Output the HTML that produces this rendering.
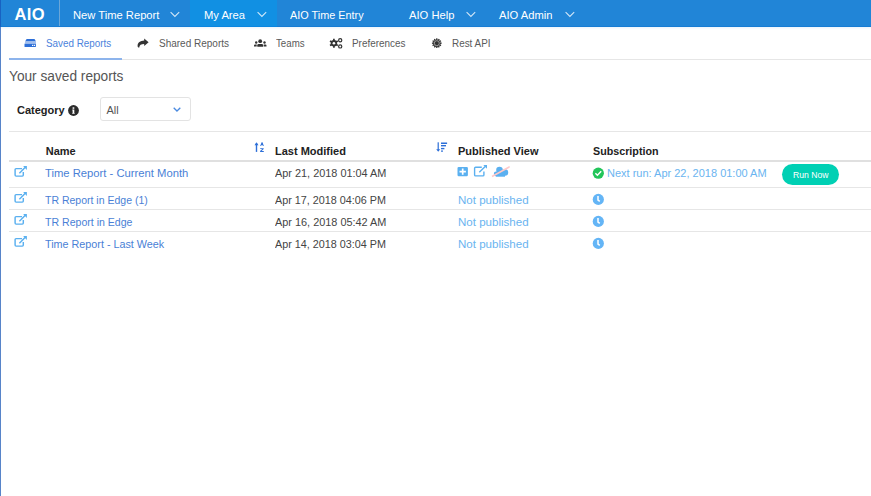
<!DOCTYPE html>
<html><head><meta charset="utf-8">
<style>
*{margin:0;padding:0;box-sizing:border-box}
html,body{width:871px;height:496px;overflow:hidden;background:#fff;font-family:"Liberation Sans",sans-serif}
.a{position:absolute;white-space:nowrap;line-height:1;transform-origin:0 0}
#lb{position:absolute;left:0;top:27px;width:1px;height:469px;background:#5784c9}#lb2{position:absolute;left:0;top:0;width:1px;height:27px;background:#1862c2}
#nav{position:absolute;left:0;top:0;width:871px;height:27px;background:#2185d7;border-bottom:1px solid #167cd4;box-shadow:0 1px 2px rgba(20,120,220,.10)}
#act{position:absolute;left:190px;top:0;width:87px;height:27px;background:#1190e3;border-bottom:1px solid #0a86e0}
#div1{position:absolute;left:59px;top:0;width:1px;height:26px;background:#6aa6d8}
.nt{color:#fff;font-size:11.2px}
.chev{position:absolute;width:9px;height:5px}
.tab{color:#5a5a5a;font-size:10px}
.hd{color:#222;font-size:11px;font-weight:bold}
.lnk{color:#4a7fd6;font-size:11px}
.dt{color:#444;font-size:11px}
.np{color:#6ab4f0;font-size:11px}
.hl{position:absolute;left:9px;width:862px;height:1px;background:#e6e6e6}
</style></head><body>
<div id="nav"></div>
<div id="act"></div>
<div id="div1"></div>
<div id="lb"></div><div id="lb2"></div>

<div class="a" style="left:14.5px;top:6px;color:#fff;font-size:16.5px;font-weight:bold;letter-spacing:.4px">AIO</div>
<div class="a nt" style="left:73px;top:10px">New Time Report</div>
<svg class="a" style="left:170px;top:11px" width="10" height="7" viewBox="0 0 10 7"><path d="M.6 1.1 4.9 5.4 9.2 1.1" fill="none" stroke="rgba(255,255,255,.8)" stroke-width="1.1"/></svg>
<div class="a nt" style="left:204px;top:10px">My Area</div>
<svg class="a" style="left:256.5px;top:11px" width="10" height="7" viewBox="0 0 10 7"><path d="M.6 1.1 4.9 5.4 9.2 1.1" fill="none" stroke="rgba(255,255,255,.8)" stroke-width="1.1"/></svg>
<div class="a nt" style="left:290px;top:10px;transform:scaleX(.97)">AIO Time Entry</div>
<div class="a nt" style="left:409px;top:10px">AIO Help</div>
<svg class="a" style="left:465.5px;top:11px" width="10" height="7" viewBox="0 0 10 7"><path d="M.6 1.1 4.9 5.4 9.2 1.1" fill="none" stroke="rgba(255,255,255,.8)" stroke-width="1.1"/></svg>
<div class="a nt" style="left:499px;top:10px">AIO Admin</div>
<svg class="a" style="left:565px;top:11px" width="10" height="7" viewBox="0 0 10 7"><path d="M.6 1.1 4.9 5.4 9.2 1.1" fill="none" stroke="rgba(255,255,255,.8)" stroke-width="1.1"/></svg>

<!-- tabs -->
<svg class="a" style="left:20px;top:35px" width="20" height="15" viewBox="0 0 20 15"><path d="M6.6 3.9H14.5L16 6.5H5.1Z" fill="#2d6fd8"/><path d="M5.1 6.5H16L16 8.8H4.8Z" fill="#a3bfee"/><path d="M4.5 8.8H15.9V11.5Q15.9 12 15.4 12H5Q4.5 12 4.5 11.5Z" fill="#2d6fd8"/><rect x="12" y="9.8" width="1.2" height="1.2" fill="#fff"/><rect x="13.8" y="9.8" width="1.2" height="1.2" fill="#fff"/></svg>
<div class="a tab" style="left:46px;top:38.6px;color:#4b82dc;transform:scaleX(.985)">Saved Reports</div>
<div class="a tab" style="left:159px;top:38.6px;transform:scaleX(1)">Shared Reports</div>
<div class="a tab" style="left:276px;top:38.6px;transform:scaleX(.97)">Teams</div>
<div class="a tab" style="left:352px;top:38.6px;transform:scaleX(.99)">Preferences</div>
<div class="a tab" style="left:452px;top:38.6px;transform:scaleX(.99)">Rest API</div>
<div style="position:absolute;left:9px;top:59px;width:862px;height:1px;background:#e6e6e6"></div>
<div style="position:absolute;left:9px;top:58px;width:113px;height:2px;background:#8db4ec"></div>

<div class="a" style="left:9px;top:68px;color:#555;font-size:15px;transform:scaleX(.913)">Your saved reports</div>

<div class="a hd" style="left:17px;top:105px;color:#222">Category</div>
<div style="position:absolute;left:100px;top:97px;width:91px;height:24px;border:1px solid #e3e3e3;border-radius:3px"></div>
<div class="a" style="left:106.5px;top:105px;color:#555;font-size:11px">All</div>
<svg class="a" style="left:172.5px;top:107px" width="8" height="5" viewBox="0 0 8 5"><path d="M.7.7 4 4 7.3.7" fill="none" stroke="#4a8ae0" stroke-width="1.3"/></svg>

<!-- table -->
<div class="hl" style="top:131px"></div>
<div class="a hd" style="left:45.7px;top:146px">Name</div>
<div class="a hd" style="left:275px;top:146px">Last Modified</div>
<div class="a hd" style="left:458px;top:146px">Published View</div>
<div class="a hd" style="left:593px;top:146px;transform:scaleX(.975)">Subscription</div>
<div style="position:absolute;left:9px;top:160px;width:862px;height:2px;background:#e0e0e0"></div>

<div class="a lnk" style="left:45px;top:168px;transform:scaleX(1.022)">Time Report - Current Month</div>
<div class="a dt" style="left:275px;top:168px;transform:scaleX(.99)">Apr 21, 2018 01:04 AM</div>
<div class="hl" style="top:187px"></div>
<div class="a lnk" style="left:45px;top:195px;transform:scaleX(.955)">TR Report in Edge (1)</div>
<div class="a dt" style="left:275px;top:195px;transform:scaleX(.98)">Apr 17, 2018 04:06 PM</div>
<div class="a np" style="transform:scaleX(1.05);left:458px;top:195px">Not published</div>
<div class="hl" style="top:209px"></div>
<div class="a lnk" style="left:45px;top:217px;transform:scaleX(.96)">TR Report in Edge</div>
<div class="a dt" style="left:275px;top:217px;transform:scaleX(.99)">Apr 16, 2018 05:42 AM</div>
<div class="a np" style="transform:scaleX(1.05);left:458px;top:217px">Not published</div>
<div class="hl" style="top:231px"></div>
<div class="a lnk" style="left:45px;top:239px;transform:scaleX(.98)">Time Report - Last Week</div>
<div class="a dt" style="left:275px;top:239px;transform:scaleX(.98)">Apr 14, 2018 03:04 PM</div>
<div class="a np" style="transform:scaleX(1.05);left:458px;top:239px">Not published</div>

<div class="a np" style="left:607px;top:168px">Next run: Apr 22, 2018 01:00 AM</div>
<div style="position:absolute;left:782px;top:164px;width:57px;height:21px;border-radius:11px;background:#00d0b4"></div>
<div class="a" style="left:793px;top:170px;color:#fff;font-size:9.6px;transform:scaleX(.9)">Run Now</div>

<!-- tab icons -->
<svg class="a" style="left:134px;top:35px" width="18" height="15" viewBox="0 0 18 15"><path d="M14.6 7.3 10.2 3.6V5.6C6.3 5.8 3.5 7.6 3.6 11.2 3.7 12.1 4.6 12.7 5.3 12.4 5.2 10.3 7.3 9.1 10.2 9.1V11Z" fill="#333"/></svg>
<svg class="a" style="left:250px;top:35px" width="20" height="15" viewBox="0 0 20 15"><circle cx="10.2" cy="6.2" r="1.9" fill="#333"/><path d="M7.3 11.8V10.2Q7.3 8.9 8.6 8.9H11.8Q13.1 8.9 13.1 10.2V11.8Z" fill="#333"/><circle cx="6.2" cy="7.5" r="1.2" fill="#333"/><circle cx="14.5" cy="7.5" r="1.2" fill="#333"/><path d="M4 11.5V10.6Q4 9.6 5 9.6H6.7V11.5Z" fill="#333"/><path d="M16.5 11.5V10.6Q16.5 9.6 15.5 9.6H13.7V11.5Z" fill="#333"/></svg>
<svg class="a" style="left:326px;top:35px" width="20" height="15" viewBox="0 0 20 15"><g fill="#333"><circle cx="7.9" cy="8.2" r="3.2"/><g stroke="#333" stroke-width="1.7"><path d="M7.9 3.7V12.7M4 6 11.8 10.4M4 10.4 11.8 6"/></g></g><circle cx="7.9" cy="8.2" r="1.3" fill="#fff"/><circle cx="14.2" cy="5.3" r="1.6" fill="none" stroke="#333" stroke-width="1.2"/><circle cx="14.2" cy="11.4" r="1.6" fill="none" stroke="#333" stroke-width="1.2"/></svg>
<svg class="a" style="left:428px;top:35px" width="18" height="15" viewBox="0 0 18 15"><path d="M8.21 3.34 L9.39 3.34 L9.56 4.68 L9.90 4.77 L10.72 3.69 L11.74 4.28 L11.22 5.53 L11.47 5.78 L12.72 5.26 L13.31 6.28 L12.23 7.10 L12.32 7.44 L13.66 7.61 L13.66 8.79 L12.32 8.96 L12.23 9.30 L13.31 10.12 L12.72 11.14 L11.47 10.62 L11.22 10.87 L11.74 12.12 L10.72 12.71 L9.90 11.63 L9.56 11.72 L9.39 13.06 L8.21 13.06 L8.04 11.72 L7.70 11.63 L6.88 12.71 L5.86 12.12 L6.38 10.87 L6.13 10.62 L4.88 11.14 L4.29 10.12 L5.37 9.30 L5.28 8.96 L3.94 8.79 L3.94 7.61 L5.28 7.44 L5.37 7.10 L4.29 6.28 L4.88 5.26 L6.13 5.78 L6.38 5.53 L5.86 4.28 L6.88 3.69 L7.70 4.77 L8.04 4.68Z" fill="#333"/><circle cx="8.8" cy="8.2" r="2.5" fill="none" stroke="#b5b5b5" stroke-width=".8"/></svg>
<!-- info -->
<svg class="a" style="left:67.9px;top:104.5px" width="11" height="11" viewBox="0 0 11 11"><circle cx="5.5" cy="5.5" r="5.4" fill="#2b2b2b"/><rect x="4.6" y="2.3" width="1.7" height="1.5" fill="#fff"/><path d="M4.3 4.6H6.3V8H6.7V8.8H4.2V8H4.6V5.4H4.3Z" fill="#fff"/></svg>
<!-- sort icons -->
<svg class="a" style="left:252px;top:140px" width="16" height="15" viewBox="0 0 16 15"><g fill="#2d6fd8"><rect x="3.8" y="3.3" width="1.4" height="8.6"/><path d="M2.5 5.2 4.5 2.3 6.5 5.2Z"/><path d="M8.2 6 9.6 2.2H10.5L11.8 6H10.8L10.5 5H9.5L9.2 6Z"/><path d="M8.2 8.2H11.7V9.1L9.6 11H11.8V11.9H8.1V11L10.2 9.1H8.2Z"/></g></svg>
<svg class="a" style="left:433px;top:140px" width="18" height="15" viewBox="0 0 18 15"><g fill="#2d6fd8"><rect x="4.6" y="2.3" width="1.2" height="8"/><path d="M3.2 9.2H7.2L5.2 11.8Z"/><rect x="8" y="2.5" width="6.1" height="1.5"/><rect x="8" y="5" width="5" height="1.4"/><rect x="8" y="7.9" width="3.4" height="1.4"/><rect x="8" y="10.5" width="2" height="1.2"/></g></svg>
<svg class="a" style="left:13px;top:166px" width="15" height="13" viewBox="0 0 15 13"><path d="M9 2.6H3.1Q2.1 2.6 2.1 3.6V9.1Q2.1 10.1 3.1 10.1H9.3Q10.3 10.1 10.3 9.1V6" fill="none" stroke="#5ab0f0" stroke-width="1.45"/><path d="M6.4 7.2 12.3 1.3" stroke="#5ab0f0" stroke-width="1.45"/><path d="M10.1 0.1H13.9V3.9Z" fill="#5ab0f0"/></svg><svg class="a" style="left:13px;top:192px" width="15" height="13" viewBox="0 0 15 13"><path d="M9 2.6H3.1Q2.1 2.6 2.1 3.6V9.1Q2.1 10.1 3.1 10.1H9.3Q10.3 10.1 10.3 9.1V6" fill="none" stroke="#5ab0f0" stroke-width="1.45"/><path d="M6.4 7.2 12.3 1.3" stroke="#5ab0f0" stroke-width="1.45"/><path d="M10.1 0.1H13.9V3.9Z" fill="#5ab0f0"/></svg><svg class="a" style="left:13px;top:214px" width="15" height="13" viewBox="0 0 15 13"><path d="M9 2.6H3.1Q2.1 2.6 2.1 3.6V9.1Q2.1 10.1 3.1 10.1H9.3Q10.3 10.1 10.3 9.1V6" fill="none" stroke="#5ab0f0" stroke-width="1.45"/><path d="M6.4 7.2 12.3 1.3" stroke="#5ab0f0" stroke-width="1.45"/><path d="M10.1 0.1H13.9V3.9Z" fill="#5ab0f0"/></svg><svg class="a" style="left:13px;top:236px" width="15" height="13" viewBox="0 0 15 13"><path d="M9 2.6H3.1Q2.1 2.6 2.1 3.6V9.1Q2.1 10.1 3.1 10.1H9.3Q10.3 10.1 10.3 9.1V6" fill="none" stroke="#5ab0f0" stroke-width="1.45"/><path d="M6.4 7.2 12.3 1.3" stroke="#5ab0f0" stroke-width="1.45"/><path d="M10.1 0.1H13.9V3.9Z" fill="#5ab0f0"/></svg>
<svg class="a" style="left:457px;top:166px" width="12" height="11" viewBox="0 0 12 11"><rect x=".5" y=".9" width="10.4" height="9.4" rx="1.2" fill="#5ab0f0"/><path d="M4.85 2.4H6.55V4.75H8.9V6.45H6.55V8.8H4.85V6.45H2.5V4.75H4.85Z" fill="#fff"/></svg>
<svg class="a" style="left:473px;top:164px" width="15" height="13" viewBox="0 0 15 13"><path d="M8.8 3.2H2.6Q1.6 3.2 1.6 4.2V10.9Q1.6 11.9 2.6 11.9H9.9Q10.9 11.9 10.9 10.9V7.5" fill="none" stroke="#5ab0f0" stroke-width="1.4"/><path d="M6.3 8.3 12.2 2.4" stroke="#5ab0f0" stroke-width="1.4"/><path d="M10.3 1H14V4.7Z" fill="#5ab0f0"/></svg>
<svg class="a" style="left:489px;top:162px" width="24" height="18" viewBox="0 0 24 18"><g fill="#5ab0f0"><circle cx="10.5" cy="8" r="3.3"/><circle cx="16" cy="10.5" r="3.2"/><circle cx="7.2" cy="12" r="2.4"/><rect x="7.2" y="10" width="8.8" height="4.7"/></g><path d="M3 14.5 20.7 4.7" stroke="#ffc8c8" stroke-width="1.5"/></svg>
<svg class="a" style="left:592px;top:167px" width="13" height="13" viewBox="0 0 13 13"><circle cx="6.3" cy="6.2" r="5.6" fill="#22c55a"/><path d="M3.4 6.3 5.4 8.2 9.2 4.3" fill="none" stroke="#fff" stroke-width="1.5"/></svg>
<svg class="a" style="left:592px;top:193px" width="13" height="13" viewBox="0 0 13 13"><circle cx="6.3" cy="6.4" r="5.6" fill="#64b5f6"/><path d="M6 3V7.1L7.8 8.4" fill="none" stroke="#fff" stroke-width="1.5"/></svg><svg class="a" style="left:592px;top:215px" width="13" height="13" viewBox="0 0 13 13"><circle cx="6.3" cy="6.4" r="5.6" fill="#64b5f6"/><path d="M6 3V7.1L7.8 8.4" fill="none" stroke="#fff" stroke-width="1.5"/></svg><svg class="a" style="left:592px;top:237px" width="13" height="13" viewBox="0 0 13 13"><circle cx="6.3" cy="6.4" r="5.6" fill="#64b5f6"/><path d="M6 3V7.1L7.8 8.4" fill="none" stroke="#fff" stroke-width="1.5"/></svg></body></html>
